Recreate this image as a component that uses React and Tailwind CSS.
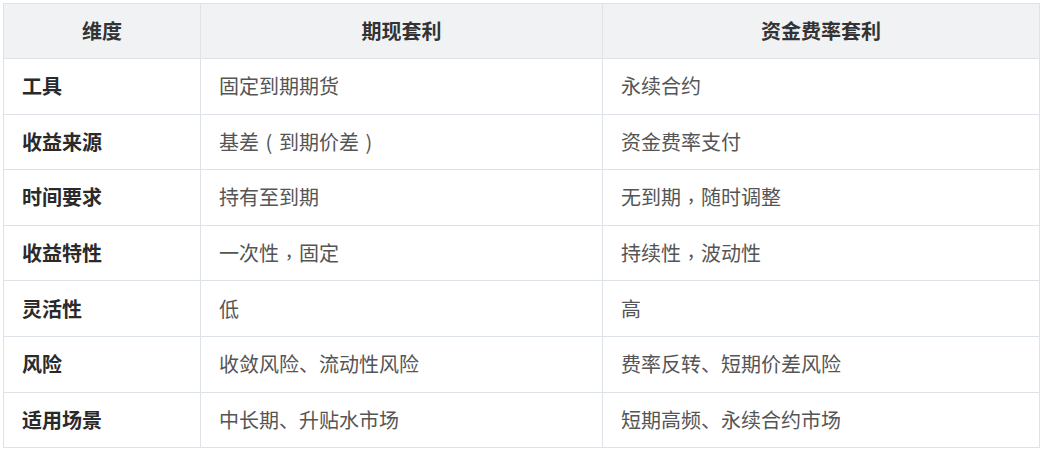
import React from 'react';

const rows = [
    ['工具', '固定到期期货', '永续合约'],
    ['收益来源', '基差（到期价差）', '资金费率支付'],
    ['时间要求', '持有至到期', '无到期，随时调整'],
    ['收益特性', '一次性，固定', '持续性，波动性'],
    ['灵活性', '低', '高'],
    ['风险', '收敛风险、流动性风险', '费率反转、短期价差风险'],
    ['适用场景', '中长期、升贴水市场', '短期高频、永续合约市场'],
];

// full-width punctuation drawn centred in its em cell, like the reference font does
const punct = { '，': ',', '（': '(', '）': ')' };

const Text = ({ value }) => (
    <>
        {value.split(/([，（）])/).map((part, i) => {
            if (!punct[part]) return part;
            if (part === '，') {
                return (
                    <span key={i} aria-label={part} className="relative -top-[4px] inline-block w-[1em] text-center">
                        {punct[part]}
                    </span>
                );
            }
            return (
                <span key={i} aria-label={part} className="inline-block w-[1em] text-center">
                    {punct[part]}
                </span>
            );
        })}
    </>
);

const App = () => {
    return (
        <div
            className="min-h-screen bg-white pt-[3px] pl-[3px] pr-[5px]"
            style={{ fontFamily: '"Noto Sans CJK SC", sans-serif' }}
        >
            <table className="w-full border-collapse table-fixed text-[20px]">
                <colgroup>
                    <col className="w-[197px]" />
                    <col className="w-[402px]" />
                    <col />
                </colgroup>
                <thead>
                    <tr className="h-[55px] bg-[#f0f2f4]">
                        <th className="border border-[#dde3e8] font-bold text-[#333] text-center">维度</th>
                        <th className="border border-[#dde3e8] font-bold text-[#333] text-center">期现套利</th>
                        <th className="border border-[#dde3e8] font-bold text-[#333] text-center">资金费率套利</th>
                    </tr>
                </thead>
                <tbody>
                    {rows.map((row) => (
                        <tr key={row[0]} className="h-[55.6px]">
                            <td className="border border-[#dde3e8] px-[18px] font-bold text-[#2a2a2a]">{row[0]}</td>
                            <td className="border border-[#dde3e8] px-[18px] text-[#555]"><Text value={row[1]} /></td>
                            <td className="border border-[#dde3e8] px-[18px] text-[#555]"><Text value={row[2]} /></td>
                        </tr>
                    ))}
                </tbody>
            </table>
        </div>
    );
};

export default App;
